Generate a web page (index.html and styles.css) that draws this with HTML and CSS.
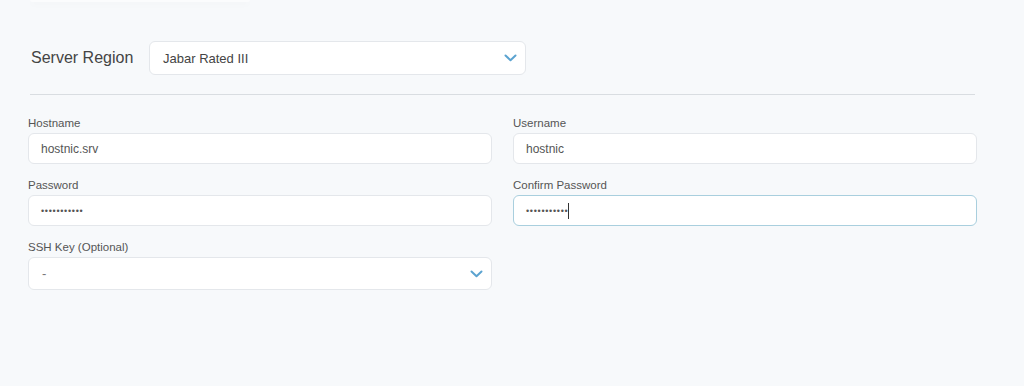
FILE: index.html
```
<!DOCTYPE html>
<html lang="en">
<head>
<meta charset="UTF-8">
<meta name="viewport" content="width=device-width, initial-scale=1.0">
<title>Server Setup</title>
<link rel="stylesheet" href="styles.css">
</head>
<body>

<div class="top-card"></div>

<div class="setup">
    <div class="region-row">
        <span class="region-label">Server Region</span>
        <div class="select region-select">
            <span>Jabar Rated III</span>
            <svg class="chevron" width="13" height="8" viewBox="0 0 13 8"><path d="M1.5 1.5 L6.5 6.2 L11.5 1.5" fill="none" stroke="#5ba3d0" stroke-width="2" stroke-linecap="round" stroke-linejoin="round"/></svg>
        </div>
    </div>

    <hr class="divider">

    <div class="form-grid">
        <div class="field">
            <label>Hostname</label>
            <div class="input">hostnic.srv</div>
        </div>
        <div class="field">
            <label>Username</label>
            <div class="input">hostnic</div>
        </div>
        <div class="field">
            <label>Password</label>
            <div class="input dots">&bull;&bull;&bull;&bull;&bull;&bull;&bull;&bull;&bull;&bull;&bull;</div>
        </div>
        <div class="field">
            <label>Confirm Password</label>
            <div class="input dots focused">&bull;&bull;&bull;&bull;&bull;&bull;&bull;&bull;&bull;&bull;&bull;<span class="caret"></span></div>
        </div>
        <div class="field">
            <label>SSH Key (Optional)</label>
            <div class="select">
                <span class="muted">-</span>
                <svg class="chevron" width="13" height="8" viewBox="0 0 13 8"><path d="M1.5 1.5 L6.5 6.2 L11.5 1.5" fill="none" stroke="#5ba3d0" stroke-width="2" stroke-linecap="round" stroke-linejoin="round"/></svg>
            </div>
        </div>
    </div>
</div>

</body>
</html>
```

FILE: styles.css
```
body {
    font-family: "Liberation Sans", Arial, sans-serif;
    margin: 0;
    padding: 0;
    background-color: #f7f9fb;
    color: #444;
}
.top-card {
    width: 220px;
    height: 2px;
    margin-left: 30px;
    background-color: #fbfcfd;
    border-radius: 0 0 8px 8px;
    box-shadow: 0 2px 6px rgba(0, 0, 0, 0.04);
}
.setup {
    padding: 39px 47px 0 28px;
}
.region-row {
    display: flex;
    align-items: center;
    padding-left: 3px;
}
.region-label {
    width: 118px;
    font-size: 16px;
    color: #444;
}
.select {
    display: flex;
    align-items: center;
    justify-content: space-between;
    height: 31px;
    padding: 0 8px 0 13px;
    background-color: #fff;
    border: 1px solid #e4e7eb;
    border-radius: 6px;
    font-size: 13px;
    color: #444;
}
.region-select {
    width: 354px;
    height: 32px;
}
.muted {
    color: #777;
}
.chevron {
    display: block;
}
.divider {
    margin: 19px 2px 0 2px;
    border: none;
    border-top: 1px solid #d9dde1;
}
.form-grid {
    display: grid;
    grid-template-columns: 1fr 1fr;
    column-gap: 21px;
    row-gap: 14px;
    margin-top: 21px;
}
.field label {
    display: block;
    font-size: 11.5px;
    color: #555;
    line-height: 14px;
    margin-bottom: 3px;
}
.input {
    display: flex;
    align-items: center;
    height: 29px;
    padding: 0 12px;
    background-color: #fff;
    border: 1px solid #e4e7eb;
    border-radius: 6px;
    font-size: 12px;
    color: #555;
}
.dots {
    font-size: 9px;
    letter-spacing: 0.7px;
}
.focused {
    border-color: #a9cfde;
}
.caret {
    display: inline-block;
    width: 1px;
    height: 16px;
    margin-left: -0.5px;
    background-color: #333;
}
```
